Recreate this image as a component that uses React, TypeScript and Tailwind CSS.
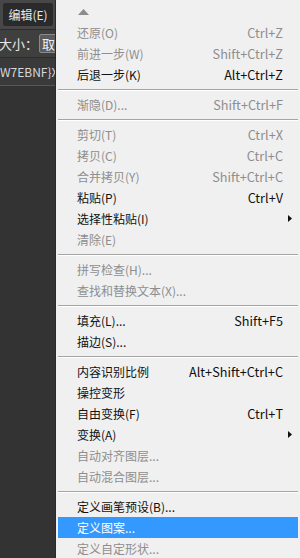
import React from "react";

type Item =
  | { label: string; shortcut?: string; disabled?: boolean; sub?: boolean; active?: boolean }
  | "sep";

// 编辑菜单内容（按截图顺序）
const items: Item[] = [
  { label: "还原(O)", shortcut: "Ctrl+Z", disabled: true },
  { label: "前进一步(W)", shortcut: "Shift+Ctrl+Z", disabled: true },
  { label: "后退一步(K)", shortcut: "Alt+Ctrl+Z" },
  "sep",
  { label: "渐隐(D)...", shortcut: "Shift+Ctrl+F", disabled: true },
  "sep",
  { label: "剪切(T)", shortcut: "Ctrl+X", disabled: true },
  { label: "拷贝(C)", shortcut: "Ctrl+C", disabled: true },
  { label: "合并拷贝(Y)", shortcut: "Shift+Ctrl+C", disabled: true },
  { label: "粘贴(P)", shortcut: "Ctrl+V" },
  { label: "选择性粘贴(I)", sub: true },
  { label: "清除(E)", disabled: true },
  "sep",
  { label: "拼写检查(H)...", disabled: true },
  { label: "查找和替换文本(X)...", disabled: true },
  "sep",
  { label: "填充(L)...", shortcut: "Shift+F5" },
  { label: "描边(S)..." },
  "sep",
  { label: "内容识别比例", shortcut: "Alt+Shift+Ctrl+C" },
  { label: "操控变形" },
  { label: "自由变换(F)", shortcut: "Ctrl+T" },
  { label: "变换(A)", sub: true },
  { label: "自动对齐图层...", disabled: true },
  { label: "自动混合图层...", disabled: true },
  "sep",
  { label: "定义画笔预设(B)..." },
  { label: "定义图案...", active: true },
  { label: "定义自定形状...", disabled: true },
];

const font = { fontFamily: '"Noto Sans CJK SC", "Noto Sans", sans-serif' };

export default function App() {
  return (
    <div className="flex w-[300px] h-[558px] overflow-hidden bg-[#333333] text-[12px]" style={font}>
      {/* 左侧工具栏残留 */}
      <div className="w-[55px] shrink-0 flex flex-col overflow-hidden">
        <div className="h-[30px] bg-[#474747] flex items-center pl-[3px] border-b border-[#2c2c2c]">
          <div className="h-[23px] w-[50px] rounded-[2px] bg-[#2a2a2a] flex items-center justify-center text-[#e6e6e6] whitespace-nowrap">
            编辑(E)
          </div>
        </div>
        <div className="h-[28px] bg-[#3f3f3f] flex items-center whitespace-nowrap border-b border-[#2c2c2c]">
          <span className="text-[#e8e8e8] -ml-[1px] text-[13px]">大小：</span>
          <div className="h-[19px] ml-[1px] pl-[2px] w-[30px] shrink-0 border border-[#8a8a8a] bg-[#5c5c5c] rounded-[2px] flex items-center text-[#f0f0f0] text-[13px]">
            取消
          </div>
        </div>
        <div className="h-[28px] bg-[#3a3a3a] flex items-center whitespace-nowrap text-[#d8d8d8] border-b border-[#575757]">
          {"W7EBNF}X"}
        </div>
        <div className="flex-1 bg-[#333333]" />
      </div>

      {/* 编辑菜单 */}
      <div className="w-[245px] shrink-0 bg-[#f0f0f0] border-l border-[#2a2a2a] pl-[2px] pr-[2px]">
        <div className="h-[22px] relative">
          <svg className="absolute left-[20px] top-[9px]" width="11" height="6" viewBox="0 0 11 6">
            <polygon points="0,6 11,6 5.5,0" fill="#8c8c8c" />
          </svg>
        </div>
        {items.map((it, i) =>
          it === "sep" ? (
            <div key={i} className="h-[9px] flex flex-col justify-center">
              <div className="h-[2px] border-t border-[#a5a5a5] border-b border-b-white" />
            </div>
          ) : (
            <div
              key={i}
              className={
                "relative h-[21px] flex items-center justify-between pl-[19px] pr-[15px] whitespace-nowrap " +
                (it.active
                  ? "bg-[#3399ff] text-white"
                  : it.disabled
                  ? "text-[#8e8e8e]"
                  : "text-[#111111]")
              }
            >
              <span>{it.label}</span>
              {it.shortcut && <span className="text-[12.7px]">{it.shortcut}</span>}
              {it.sub && (
                <svg className="absolute right-[6px] top-[7px]" width="4" height="7" viewBox="0 0 4 7">
                  <polygon points="0,0 4,3.5 0,7" fill="#111111" />
                </svg>
              )}
            </div>
          )
        )}
      </div>
    </div>
  );
}
